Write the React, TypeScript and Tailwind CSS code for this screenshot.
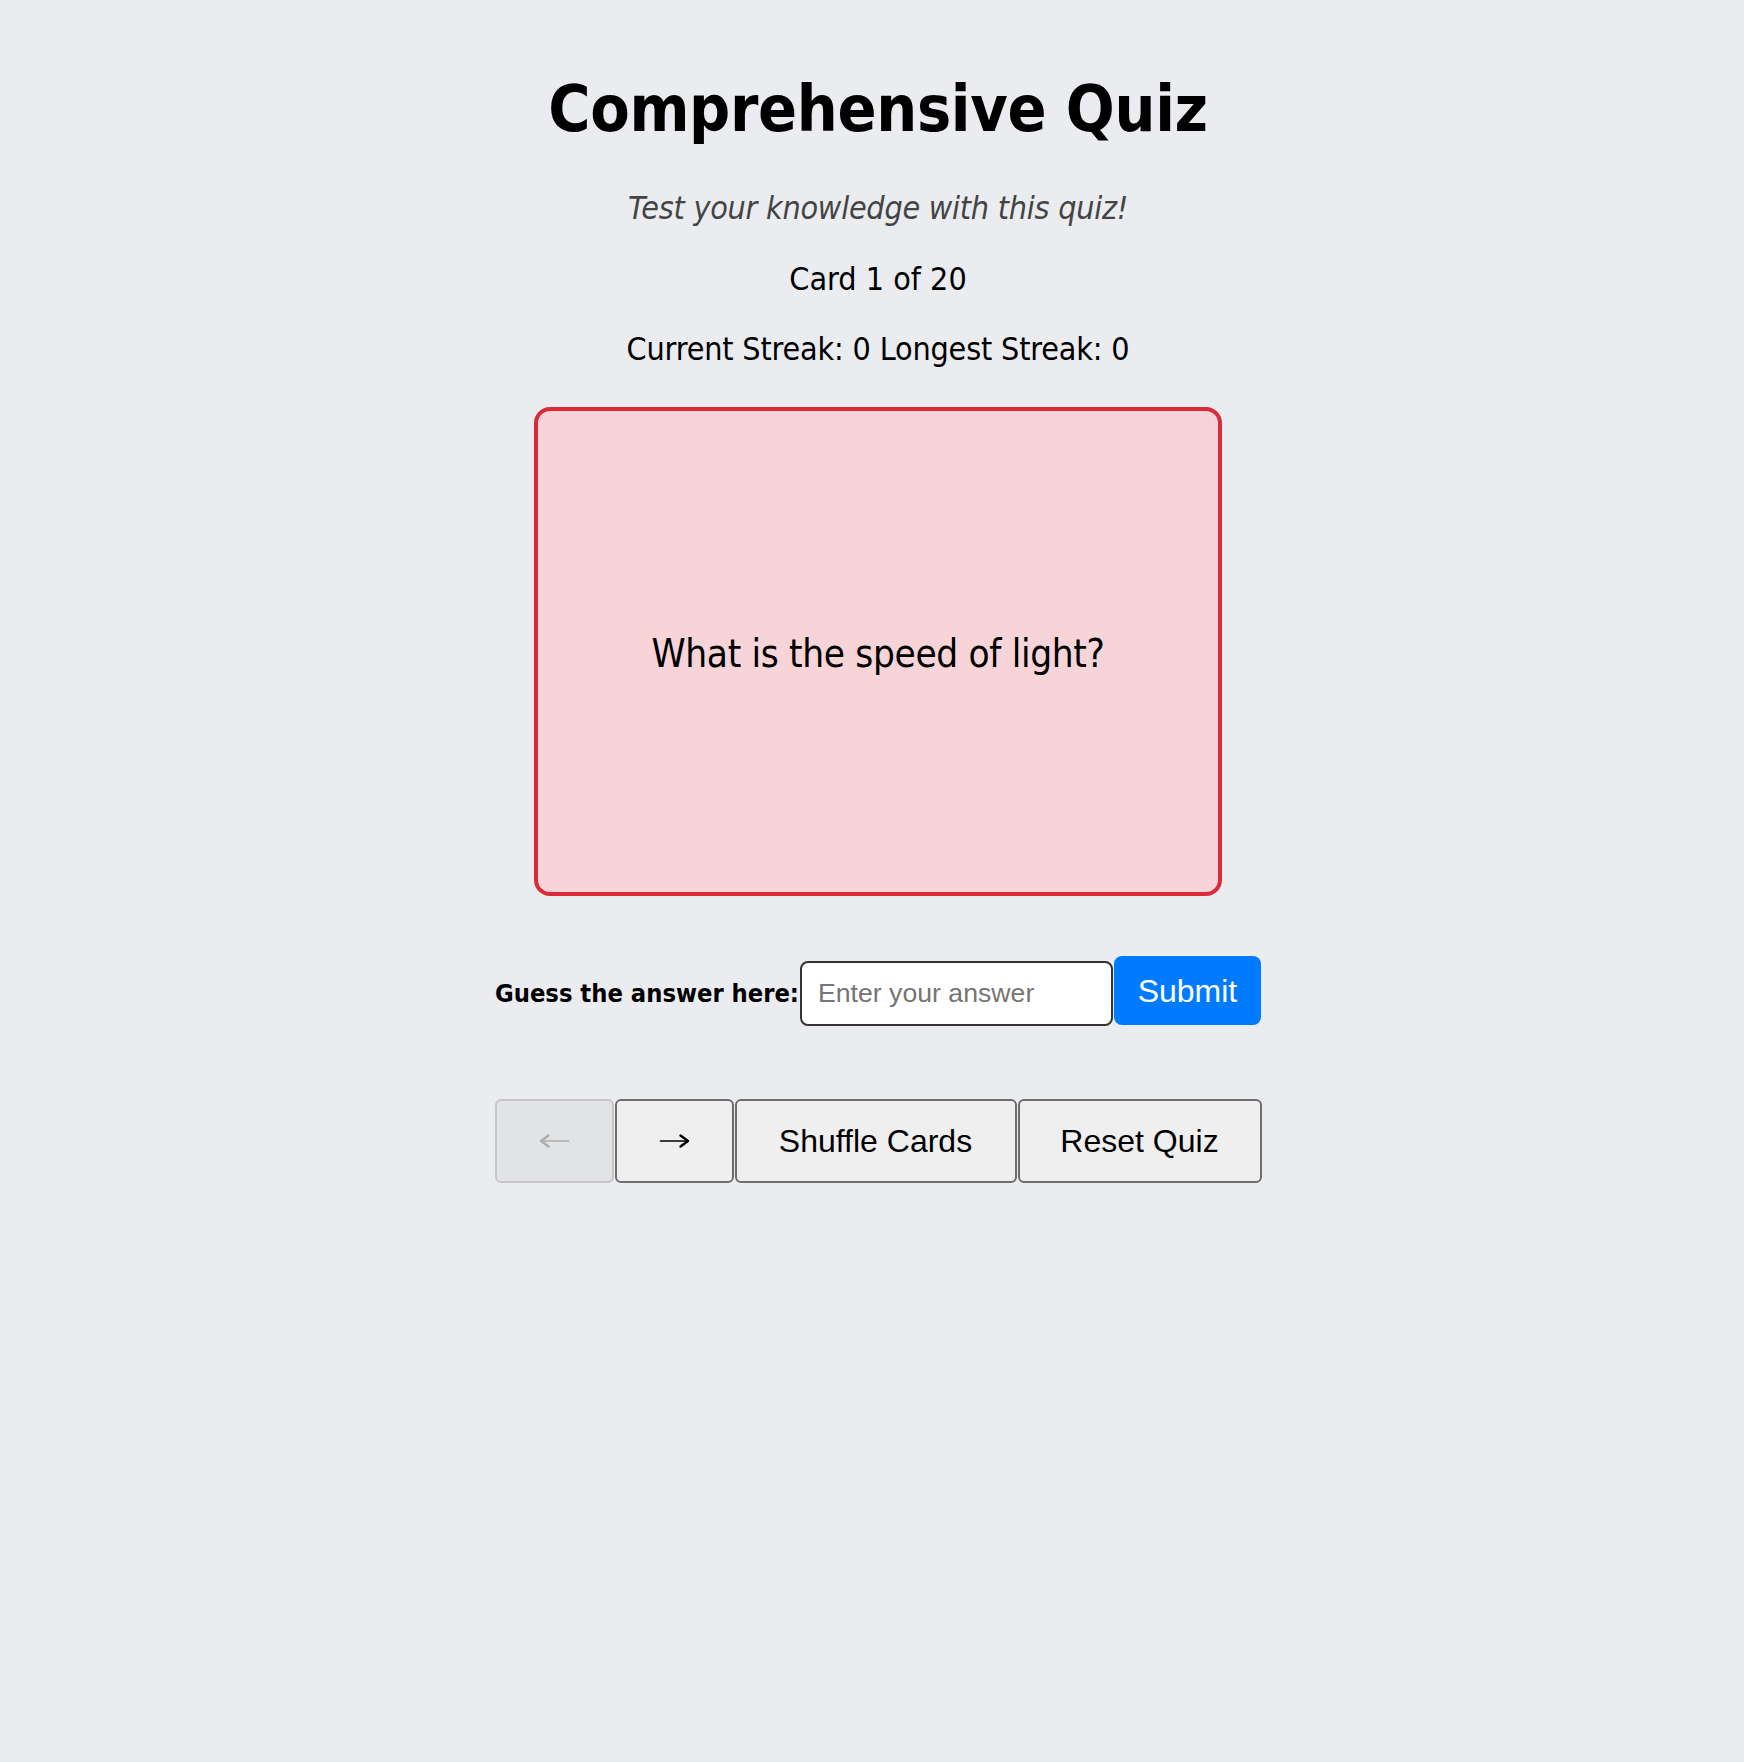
import { useState } from "react";

const cards = [
  { q: "What is the speed of light?", a: "299,792 km/s" },
];

function Arrow({ dir, muted }: { dir: "left" | "right"; muted?: boolean }) {
  return (
    <svg
      width="31"
      height="16"
      viewBox="0 0 31 16"
      fill="none"
      stroke="currentColor"
      strokeWidth="2"
      strokeLinecap="round"
      className={`mx-auto ${dir === "left" ? "-scale-x-100" : ""} ${muted ? "opacity-60" : ""}`}
    >
      <path d="M1.5 8H28.5" strokeWidth="1.6" />
      <path d="M21.5 2.5 L29 8 L21.5 13.5" strokeWidth="2.4" strokeLinejoin="round" />
    </svg>
  );
}

export default function App() {
  const [guess, setGuess] = useState("");
  const index = 0;
  const total = 20;

  return (
    <div className="min-h-screen bg-[#eaecf0] font-['DejaVu_Sans_Condensed','DejaVu_Sans',sans-serif] text-black">
      <div className="flex flex-col items-center pl-3 pt-[73px]">
        <h1 className="text-[64px] leading-[72px] font-bold tracking-[-0.33px]">Comprehensive Quiz</h1>
        <p className="mt-[43px] text-[32px] leading-[40px] italic tracking-[-0.25px] text-[#444]">
          Test your knowledge with this quiz!
        </p>
        <p className="mt-[31px] text-[32px] leading-[40px]">
          Card {index + 1} of {total}
        </p>
        <p className="mt-[30px] text-[32px] leading-[40px] tracking-[-0.17px]">
          Current Streak: 0 Longest Streak: 0
        </p>

        <div className="mt-[38px] flex h-[489px] w-[688px] items-center justify-center rounded-[16px] border-4 border-[#dc2a38] bg-[#f6d4d8]">
          <p className="pt-[4px] text-[38.4px] tracking-[-0.35px]">{cards[index].q}</p>
        </div>

        <form className="mt-[60px] flex items-baseline" onSubmit={(e) => e.preventDefault()}>
          <label htmlFor="guess" className="mr-px text-[25.3px] font-bold">
            Guess the answer here:
          </label>
          <input
            id="guess"
            value={guess}
            onChange={(e) => setGuess(e.target.value)}
            placeholder="Enter your answer"
            className="h-[65px] w-[313px] rounded-[8px] border-2 border-[#333] bg-white px-[16px] font-['Liberation_Sans',Arial,sans-serif] text-[26.67px] placeholder:text-[#757575] outline-none"
          />
          <button
            type="submit"
            className="ml-px h-[69px] w-[147px] rounded-[8px] bg-[#007bff] font-['Liberation_Sans',Arial,sans-serif] text-[32px] text-white"
          >
            Submit
          </button>
        </form>

        <div className="mt-[73px] flex font-['Liberation_Sans',Arial,sans-serif] text-[32px]">
          <button
            disabled
            aria-label="Previous card"
            className="flex h-[84px] w-[119px] items-center rounded-[6px] border-2 border-[#c6c6c8] bg-[#e2e3e5] text-[#8a8a8a]"
          >
            <Arrow dir="left" muted />
          </button>
          <button
            aria-label="Next card"
            className="ml-px flex h-[84px] w-[119px] items-center rounded-[6px] border-2 border-[#6e6e6e] bg-[#efefef]"
          >
            <Arrow dir="right" />
          </button>
          <button className="ml-px h-[84px] w-[282px] rounded-[6px] border-2 border-[#6e6e6e] bg-[#efefef]">
            Shuffle Cards
          </button>
          <button className="ml-px h-[84px] w-[244px] rounded-[6px] border-2 border-[#6e6e6e] bg-[#efefef]">
            Reset Quiz
          </button>
        </div>
      </div>
    </div>
  );
}
